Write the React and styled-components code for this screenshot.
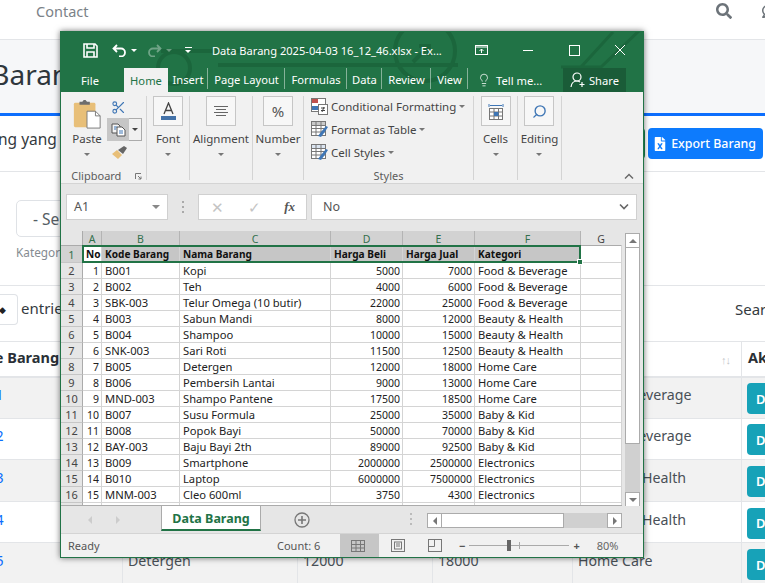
import React from 'react';
import styled, { createGlobalStyle } from 'styled-components';
import { FaSearch, FaRegComment, FaFileExcel } from 'react-icons/fa';
import { Scissors, Search, Lightbulb } from 'lucide-react';

const items = [
    [1, 'B001', 'Kopi', 5000, 7000, 'Food & Beverage'],
    [2, 'B002', 'Teh', 4000, 6000, 'Food & Beverage'],
    [3, 'SBK-003', 'Telur Omega (10 butir)', 22000, 25000, 'Food & Beverage'],
    [4, 'B003', 'Sabun Mandi', 8000, 12000, 'Beauty & Health'],
    [5, 'B004', 'Shampoo', 10000, 15000, 'Beauty & Health'],
    [6, 'SNK-003', 'Sari Roti', 11500, 12500, 'Beauty & Health'],
    [7, 'B005', 'Detergen', 12000, 18000, 'Home Care'],
    [8, 'B006', 'Pembersih Lantai', 9000, 13000, 'Home Care'],
    [9, 'MND-003', 'Shampo Pantene', 17500, 18500, 'Home Care'],
    [10, 'B007', 'Susu Formula', 25000, 35000, 'Baby & Kid'],
    [11, 'B008', 'Popok Bayi', 50000, 70000, 'Baby & Kid'],
    [12, 'BAY-003', 'Baju Bayi 2th', 89000, 92500, 'Baby & Kid'],
    [13, 'B009', 'Smartphone', 2000000, 2500000, 'Electronics'],
    [14, 'B010', 'Laptop', 6000000, 7500000, 'Electronics'],
    [15, 'MNM-003', 'Cleo 600ml', 3750, 4300, 'Electronics'],
];

const pageRows = [
    ['B001', 'Kopi', 5000, 7000, 'Food & Beverage'],
    ['B002', 'Teh', 4000, 6000, 'Food & Beverage'],
    ['B003', 'Sabun Mandi', 8000, 12000, 'Beauty & Health'],
    ['B004', 'Shampoo', 10000, 15000, 'Beauty & Health'],
    ['B005', 'Detergen', 12000, 18000, 'Home Care'],
];

const GlobalStyle = createGlobalStyle`
    html, body { margin: 0; padding: 0; background: #fff; }
    * { box-sizing: border-box; }
`;

const Page = styled.div`
    position: relative;
    width: 765px;
    height: 583px;
    overflow: hidden;
    background: #fff;
    color: #343a40;
    font-family: "Noto Sans", sans-serif;
    font-size: 14.2px;
`;

const Navbar = styled.nav`
    display: flex;
    align-items: center;
    justify-content: space-between;
    height: 40px;
    padding: 0 0 18px 36px;
    border-bottom: 1px solid #e3e5e8;
    color: #7b8288;
    font-size: 14.5px;
`;

const NavIcons = styled.div`
    display: flex;
    gap: 30px;
    margin-right: -13px;
    padding-top: 1px;
    color: #6c7379;
    font-size: 16px;
`;

const TitleBand = styled.div`
    display: flex;
    align-items: center;
    height: 76px;
    padding-bottom: 6px;
    background: #f6f7f9;
    border-bottom: 3px solid #0d6efd;
`;

const Title = styled.h1`
    margin: 0 0 0 -78px;
    font-size: 28px;
    font-weight: 400;
    color: #2f363c;
`;

const ActionRow = styled.div`
    display: flex;
    align-items: center;
    justify-content: space-between;
    height: 56px;
    padding: 0 2px 0 0;
    border-bottom: 1px solid #e3e5e8;
`;

const Lead = styled.p`
    margin: 0 0 10px -35px;
    font-size: 15.5px;
    color: #343a40;
`;

const Actions = styled.div`
    display: flex;
    gap: 3px;
`;

const PageButton = styled.button`
    display: flex;
    align-items: center;
    gap: 4px;
    height: 31px;
    padding: 0 7px 0 5px;
    border: 0;
    border-radius: 4px;
    background: ${p => p.$bg};
    color: #fff;
    font: 500 12.4px "Noto Sans", sans-serif;
`;

const FilterRow = styled.div`
    height: 114px;
    padding: 28px 0 0 16px;
    border-bottom: 1px solid #e3e5e8;
`;

const FilterSelect = styled.div`
    width: 180px;
    height: 37px;
    padding: 7px 16px;
    border: 1px solid #dfe2e6;
    border-radius: 5px;
    color: #555c63;
    font-size: 15.5px;
`;

const FilterLabel = styled.div`
    margin-top: 7px;
    color: #858b91;
    font-size: 11.8px;
`;

const Controls = styled.div`
    display: flex;
    align-items: center;
    justify-content: space-between;
    height: 55px;
    padding-bottom: 8px;
`;

const Entries = styled.div`
    display: flex;
    align-items: center;
    gap: 3px;
`;

const EntriesSelect = styled.div`
    display: flex;
    align-items: center;
    justify-content: flex-end;
    width: 18px;
    height: 31px;
    padding-right: 11px;
    border: 1px solid #dfe2e6;
    border-left: 0;
    border-radius: 0 4px 4px 0;
    font-size: 9px;
    color: #222;
`;

const EntriesText = styled.span`
    margin-bottom: 3px;
    font-size: 15px;
`;

const SearchLabel = styled.div`
    width: 30px;
    margin-bottom: 1px;
    font-size: 15px;
    white-space: nowrap;
`;

const DataTable = styled.table`
    width: 960px;
    margin-left: -40px;
    border-collapse: collapse;
    table-layout: fixed;
`;

const Th = styled.th`
    width: ${p => p.$w}px;
    height: 35px;
    padding: 0 5px 4px 6px;
    border: 1px solid #e3e5e8;
    border-bottom: 2px solid #e3e5e8;
    text-align: left;
    font-size: 14.5px;
    font-weight: 700;
    color: #2a3036;
`;

const SortMark = styled.span`
    float: right;
    color: #c3c6c9;
    font-size: 11px;
    font-weight: 400;
    letter-spacing: -1px;
    margin: 5px 6px 0 0;
`;

const Tr = styled.tr`
    background: ${p => (p.$odd ? '#f2f2f2' : '#fff')};
`;

const Td = styled.td`
    height: 41.6px;
    padding: 0 5px 6px ${p => (p.$link ? 9 : 5)}px;
    border: 1px solid #e3e5e8;
    color: ${p => p.$link ? '#0d6efd' : '#495057'};
    white-space: nowrap;
    overflow: hidden;
`;

const ActionTd = styled.td`
    height: 41.6px;
    padding: 0 5px;
    border: 1px solid #e3e5e8;
`;

const DetailButton = styled.button`
    display: block;
    width: 60px;
    height: 31px;
    margin-top: 2px;
    padding: 0 9px;
    border: 0;
    border-radius: 4px;
    background: #17a2b8;
    color: #fff;
    text-align: left;
    font: 600 13px "Noto Sans", sans-serif;
`;

/* excel window, floats over the page */
const Excel = styled.section`
    position: absolute;
    left: 60px;
    top: 31px;
    width: 584px;
    height: 527px;
    display: flex;
    flex-direction: column;
    border: 1px solid #217346;
    background: #e6e6e6;
    box-shadow: 0 0 6px rgba(0, 0, 0, .55);
    font-family: "Noto Sans", sans-serif;
    color: #444;
`;

const GreenHead = styled.header`
    position: relative;
    flex: none;
    height: 60px;
    background: #217346;
    color: #fff;
    overflow: hidden;
`;

const Circuit = styled.svg`
    position: absolute;
    inset: 0;
`;

const TitleBar = styled.div`
    position: relative;
    display: flex;
    align-items: center;
    height: 36px;
    font-size: 11.1px;
`;

const Qat = styled.div`
    display: flex;
    align-items: center;
    width: 153px;
    padding-left: 19px;
`;

const QatSlot = styled.span`
    display: flex;
    flex-direction: column;
    align-items: center;
    justify-content: center;
    gap: 2px;
    width: ${p => p.$w}px;
    margin-left: ${p => p.$ml ?? 0}px;
    opacity: ${p => (p.$dim ? 0.35 : 1)};
`;

const QatBar = styled.i`
    display: block;
    width: 7px;
    height: 1px;
    background: #fff;
`;

const DocName = styled.div`
    width: 251px;
    white-space: nowrap;
`;

const WinButtons = styled.div`
    display: flex;
    align-items: center;
`;

const WinButton = styled.span`
    display: flex;
    justify-content: center;
    width: 46px;
`;

const TabRow = styled.div`
    position: relative;
    display: flex;
    align-items: stretch;
    height: 24px;
    font-size: 11.2px;
`;

const Tab = styled.div`
    display: flex;
    align-items: center;
    justify-content: center;
    width: ${p => p.$w}px;
    padding-top: ${p => (p.$sep ? 2 : 1)}px;
    padding-right: ${p => p.$pr ?? 0}px;
    background: ${p => (p.$active ? '#f1f1f1' : 'transparent')};
    color: ${p => (p.$active ? '#217346' : '#fff')};
    box-shadow: ${p => (p.$sep ? 'inset -1px 0 0 rgba(255,255,255,.45)' : 'none')};
    margin: ${p => (p.$sep ? '0 0 3px' : '0')};
`;

const TellMe = styled.div`
    display: flex;
    align-items: center;
    gap: 5px;
    width: 95px;
    padding-left: 9px;
`;

const Share = styled.div`
    display: flex;
    align-items: center;
    justify-content: center;
    gap: 3px;
    width: 63px;
    background: #1a5c38;
`;

const Ribbon = styled.div`
    flex: none;
    display: flex;
    height: 92px;
    background: #f1f1f1;
    border-bottom: 1px solid #d4d4d4;
    font-size: 11.5px;
`;

const Group = styled.div`
    position: relative;
    flex: none;
    display: flex;
    flex-direction: column;
    align-items: center;
    width: ${p => p.$w}px;
    height: 84px;
    margin-top: 4px;
    border-right: 1px solid #d4d4d4;
`;

const GroupBody = styled.div`
    flex: 1;
    display: flex;
    flex-direction: column;
    align-items: center;
    min-height: 0;
    padding-top: 0;
`;

const GroupLabel = styled.div`
    flex: none;
    height: 14px;
    margin-bottom: -3px;
    font-size: 11px;
    color: #5c5c5c;
    line-height: 14px;
`;

const BigButton = styled.div`
    display: flex;
    align-items: center;
    justify-content: center;
    width: 30px;
    height: 30px;
    border: 1px solid #c6c6c6;
    background: #f7f7f7;
    color: #555;
    font-size: ${p => p.$fs ?? 12}px;
`;

const BigLabel = styled.div`
    margin-top: ${p => p.$top ?? 5}px;
    line-height: 16px;
    color: #444;
`;

const Caret = styled.span`
    width: 0;
    height: 0;
    margin-top: ${p => p.$top ?? 6}px;
    margin-left: ${p => p.$left ?? 0}px;
    border-left: 3px solid transparent;
    border-right: 3px solid transparent;
    border-top: 3px solid ${p => p.$c ?? '#777'};
`;

const ClipboardBody = styled.div`
    flex: 1;
    display: flex;
    width: 100%;
    min-height: 0;
    padding-left: 11px;
`;

const PasteColumn = styled.div`
    display: flex;
    flex-direction: column;
    align-items: center;
    width: 30px;
    padding-top: 3px;
`;

const ClipTools = styled.div`
    display: flex;
    flex-direction: column;
    align-items: flex-start;
    margin-left: 5px;
`;

const ToolSlot = styled.div`
    display: flex;
    align-items: center;
    height: ${p => p.$h}px;
    padding-left: 4px;
    color: #3f76b5;
`;

const CopyBox = styled.div`
    display: flex;
    width: 35px;
    height: 23px;
`;

const CopyIcon = styled.div`
    display: flex;
    align-items: center;
    justify-content: center;
    width: 22px;
    background: #c6c6c6;
`;

const CopyDrop = styled.div`
    display: flex;
    align-items: center;
    justify-content: center;
    width: 13px;
    border: 1px solid #ababab;
    border-left: 0;
`;

const Launcher = styled.svg`
    position: absolute;
    right: 4px;
    bottom: 0;
`;

const StyleList = styled.div`
    flex: 1;
    display: flex;
    flex-direction: column;
    align-self: flex-start;
    min-height: 0;
    margin-top: -1px;
    padding-left: 7px;
`;

const StyleLine = styled.div`
    display: flex;
    align-items: center;
    gap: 3px;
    flex: none;
    height: 23px;
    font-size: 11.5px;
    white-space: nowrap;
`;

const Collapse = styled.svg`
    position: absolute;
    right: 9px;
    bottom: 3px;
`;

const RibbonEnd = styled.div`
    position: relative;
    flex: 1;
`;

const FormulaBar = styled.div`
    flex: none;
    display: flex;
    align-items: center;
    height: 47px;
    padding: 0 6px 2px 5px;
    background: #e6e6e6;
`;

const FieldBox = styled.div`
    display: flex;
    align-items: center;
    justify-content: ${p => p.$between ? 'space-between' : 'flex-start'};
    flex: ${p => (p.$w ? 'none' : 1)};
    width: ${p => p.$w}px;
    height: 26px;
    margin-right: ${p => p.$mr ?? 0}px;
    padding: 0 7px 0 ${p => p.$pl ?? 7}px;
    background: #fff;
    border: 1px solid #d0d0d0;
    font-size: 12.5px;
    color: #555;
`;

const Grip = styled.div`
    width: 2px;
    height: 12px;
    margin: 0 14px;
    background: repeating-linear-gradient(#aaa 0 2px, transparent 2px 5px);
`;

const FxIcons = styled.div`
    display: flex;
    align-items: center;
    justify-content: space-between;
    width: 100%;
    padding: 0 4px 0 5px;
    color: #c4c4c4;
    font-size: 15px;
`;

const Fx = styled.span`
    color: #555;
    font: italic 700 13px "Liberation Serif", serif;
`;

const SheetArea = styled.div`
    flex: none;
    display: flex;
    height: 275px;
`;

const SheetGrid = styled.div`
    position: relative;
    display: grid;
    grid-template-columns: 22px 19px 78px 151px 72px 72px 106px 41px;
    grid-template-rows: 15px 17px repeat(15, 16px) 3px;
    width: 561px;
    height: 275px;
    background: #fff;
    overflow: hidden;
    border-bottom: 1px solid #ababab;
    font-size: 11.2px;
    color: #222;
`;

const Corner = styled.div`
    display: flex;
    align-items: flex-end;
    justify-content: flex-end;
    padding: 0 2px 2px 0;
    background: #e6e6e6;
    border-right: 1px solid #ababab;
    border-bottom: 1px solid #ababab;
`;

const ColHead = styled.div`
    display: flex;
    align-items: center;
    justify-content: center;
    padding-top: 1px;
    background: ${p => (p.$on ? '#d2d2d2' : '#e6e6e6')};
    color: ${p => (p.$on ? '#33704d' : '#444')};
    border-right: 1px solid ${p => (p.$on ? '#b4b4b4' : '#e6e6e6')};
    border-bottom: 1px solid #ababab;
    font-size: 10.5px;
`;

const RowHead = styled.div`
    display: flex;
    align-items: center;
    justify-content: center;
    background: ${p => (p.$on ? '#d2d2d2' : '#e6e6e6')};
    color: ${p => (p.$on ? '#33704d' : '#444')};
    border-right: 1px solid #ababab;
    border-bottom: 1px solid #c6c6c6;
    font-size: 11px;
`;

const Cell = styled.div`
    display: flex;
    align-items: center;
    justify-content: ${p => (p.$num ? 'flex-end' : 'flex-start')};
    padding: 0 2px 0 ${p => (p.$num ? 2 : 3)}px;
    border-right: 1px solid #d4d4d4;
    border-bottom: 1px solid #d4d4d4;
    background: ${p => (p.$sel ? '#c6c6c6' : '#fff')};
    font-size: ${p => (p.$head ? 10.1 : p.$num ? 10.5 : 11.2)}px;
    font-weight: ${p => (p.$head ? 700 : 400)};
    color: ${p => (p.$head ? '#111' : '#222')};
    white-space: nowrap;
    overflow: hidden;
`;

const Selection = styled.div`
    position: absolute;
    left: 21px;
    top: 14px;
    width: 499px;
    height: 18px;
    border: 2px solid #217346;
`;

const FillHandle = styled.div`
    position: absolute;
    right: -4px;
    bottom: -4px;
    width: 6px;
    height: 6px;
    background: #217346;
    border: 1px solid #fff;
`;

const VScroll = styled.div`
    display: flex;
    flex-direction: column;
    width: 15px;
    height: 274px;
    margin: 2px 0 0 3px;
    background: #d0d0d0;
`;

const ScrollBtn = styled.div`
    flex: none;
    display: flex;
    align-items: center;
    justify-content: center;
    width: ${p => p.$w ?? 15}px;
    height: ${p => p.$h ?? 15}px;
    background: #fff;
    border: 1px solid #ababab;
`;

const VThumb = styled.div`
    flex: none;
    height: 196px;
    background: #fff;
    border: 1px solid #ababab;
    border-top: 0;
`;

const Spring = styled.div`
    flex: 1;
`;

const Arrow = styled.span`
    width: 0;
    height: 0;
    border: 4px solid transparent;
    ${p => p.$dir === 'up' && `border-bottom-color: ${p.$c}; border-top-width: 0;`}
    ${p => p.$dir === 'down' && `border-top-color: ${p.$c}; border-bottom-width: 0;`}
    ${p => p.$dir === 'left' && `border-right-color: ${p.$c}; border-left-width: 0;`}
    ${p => p.$dir === 'right' && `border-left-color: ${p.$c}; border-right-width: 0;`}
`;

const SheetBar = styled.div`
    flex: none;
    display: flex;
    align-items: flex-start;
    height: 28px;
    background: #e6e6e6;
    border-bottom: 1px solid #d4d4d4;
`;

const SheetNav = styled.div`
    display: flex;
    align-items: center;
    gap: 24px;
    width: 100px;
    height: 27px;
    padding-left: 27px;
`;

const SheetTab = styled.div`
    display: flex;
    align-items: center;
    justify-content: center;
    width: 100px;
    height: 25px;
    padding-top: 2px;
    background: #fff;
    border-left: 1px solid #ababab;
    border-right: 1px solid #ababab;
    border-bottom: 2px solid #217346;
    color: #217346;
    font-size: 12.5px;
    font-weight: 700;
`;

const AddSheet = styled.div`
    display: flex;
    justify-content: center;
    width: 81px;
    padding-top: 6px;
`;

const BarGrip = styled.div`
    width: 2px;
    height: 12px;
    margin: 7px 15px 0 68px;
    background: repeating-linear-gradient(#bbb 0 2px, transparent 2px 5px);
`;

const HScroll = styled.div`
    display: flex;
    width: 195px;
    height: 15px;
    margin-top: 7px;
    background: #d0d0d0;
`;

const HThumb = styled.div`
    flex: none;
    width: 122px;
    background: #fff;
    border: 1px solid #ababab;
    border-left: 0;
`;

const StatusBar = styled.footer`
    flex: 1;
    display: flex;
    align-items: center;
    background: #f1f1f1;
    font-size: 11px;
    color: #555;
`;

const Ready = styled.div`
    width: 216px;
    padding-left: 7px;
`;

const Count = styled.div`
    width: 63px;
`;

const ViewBtn = styled.div`
    display: flex;
    align-items: center;
    justify-content: center;
    width: ${p => p.$w}px;
    height: 100%;
    padding-right: ${p => p.$pr ?? 0}px;
    background: ${p => (p.$on ? '#c6c6c6' : 'transparent')};
`;

const Zoom = styled.div`
    display: flex;
    align-items: center;
    margin-left: 6px;
    color: #555;
`;

const Slider = styled.div`
    position: relative;
    width: 100px;
    height: 1px;
    margin: 0 4px;
    background: #aaa;
`;

const SliderKnob = styled.span`
    position: absolute;
    left: 38px;
    top: -5px;
    width: 4px;
    height: 11px;
    background: #666;
`;

const SliderTick = styled.span`
    position: absolute;
    left: 50px;
    top: -3px;
    width: 1px;
    height: 7px;
    background: #aaa;
`;

const Percent = styled.div`
    margin-left: 17px;
    font-size: 11px;
    color: #666;
`;

const SaveIcon = () => (
    <svg width="15" height="15" viewBox="0 0 15 15" fill="none" stroke="#fff" strokeWidth="1.6">
        <path d="M1 1h11l2 2v11H1z" />
        <path d="M4 1v4h7V1M4 14V9h7v5" />
    </svg>
);

const UndoIcon = ({ color = '#fff', flip }) => (
    <svg width="15" height="13" viewBox="0 0 15 13" fill="none" stroke={color} strokeWidth="1.8" style={flip ? { transform: 'scaleX(-1)' } : undefined}>
        <path d="M5 1 1.500 4.500 5 8M2 4.500h7a4 4 0 0 1 0 8H7" />
    </svg>
);

const PasteIcon = () => (
    <svg width="30" height="30" viewBox="0 0 30 32" style={{ flex: 'none' }}>
        <rect x="1" y="4" width="23" height="26" rx="1.500" fill="#e8bf78" />
        <path d="M7 6V3h3l1.500-2h2L15 3h3v3z" fill="#6d6d6d" />
        <path d="M15 13h9l5 5v13H15z" fill="#fff" stroke="#777" />
        <path d="M24 13v5h5" fill="none" stroke="#777" />
    </svg>
);

const CopySmall = () => (
    <svg width="15" height="14" viewBox="0 0 15 14" fill="#f4f4f4" stroke="#555">
        <path d="M1 1h6l2 2v7H1z" />
        <path d="M6 4h5l3 3v6H6z" fill="#fff" />
        <path d="M3 4h3M3 6h2M8 8h4M8 10h4" stroke="#3f76b5" />
    </svg>
);

const BrushIcon = () => (
    <svg width="17" height="15" viewBox="0 0 17 15">
        <path d="M1 9l5-4 5 5-4 4z" fill="#e8bf78" />
        <path d="M6 5l6-4 3 2-4 6z" fill="#666" transform="translate(1 0)" />
    </svg>
);

const TableIcon = ({ tint }) => (
    <svg width="17" height="17" viewBox="0 0 17 17" fill="none" stroke="#777">
        <rect x=".5" y=".5" width="14" height="14" fill="#fff" />
        <rect x=".5" y=".5" width="14" height="4" fill={tint} />
        <path d="M.5 7.500h14M.5 11h14M5 .5v14M10 .5v14" />
        <path d="M7 15l3-4 5-6 2 1-4 6-3 4z" fill="#3f76b5" stroke="none" />
    </svg>
);

const CondIcon = () => (
    <svg width="17" height="17" viewBox="0 0 17 17" stroke="#777">
        <rect x=".5" y=".5" width="14" height="13" fill="#fff" />
        <rect x="1" y="1" width="6" height="4" fill="#c0504d" stroke="none" />
        <rect x="1" y="8" width="6" height="4" fill="#3f76b5" stroke="none" />
        <rect x="7.500" y="6.500" width="9" height="10" fill="#fff" />
        <path d="M10 10h4M10 12.500h4M11 14l2-5" stroke="#444" fill="none" />
    </svg>
);

const ShareIcon = () => (
    <svg width="16" height="16" viewBox="0 0 16 16" fill="none" stroke="#fff" strokeWidth="1.2">
        <circle cx="7" cy="5" r="4" />
        <path d="M1 15c.5-4 3-6 6-6 1.200 0 2 .3 3 1M12 10v5M9.500 12.500h5" />
    </svg>
);

const App = () => {
    return (
        <Page>
            <GlobalStyle />
            <Navbar>
                <span>Contact</span>
                <NavIcons>
                    <FaSearch />
                    <FaRegComment />
                </NavIcons>
            </Navbar>
            <TitleBand>
                <Title>Data Barang</Title>
            </TitleBand>
            <ActionRow>
                <Lead>barang yang tersedia</Lead>
                <Actions>
                    <PageButton $bg="#198754">Import</PageButton>
                    <PageButton $bg="#0d7bfd"><FaFileExcel size={14} /> Export Barang</PageButton>
                </Actions>
            </ActionRow>
            <FilterRow>
                <FilterSelect>- Semua Kategori -</FilterSelect>
                <FilterLabel>Kategori</FilterLabel>
            </FilterRow>
            <Controls>
                <Entries>
                    <EntriesSelect>◆</EntriesSelect>
                    <EntriesText>entries per page</EntriesText>
                </Entries>
                <SearchLabel>Search:</SearchLabel>
            </Controls>
            <DataTable>
                <thead>
                    <tr>
                        <Th $w={162}>Kode Barang</Th>
                        <Th $w={175}>Nama Barang</Th>
                        <Th $w={135}>Harga Beli</Th>
                        <Th $w={140}>Harga Jual</Th>
                        <Th $w={169}>Kategori<SortMark>↑↓</SortMark></Th>
                        <Th $w={179}>Aksi</Th>
                    </tr>
                </thead>
                <tbody>
                    {pageRows.map((row, i) => (
                        <Tr key={row[0]} $odd={i % 2 === 0}>
                            <Td $link>{row[0]}</Td>
                            <Td>{row[1]}</Td>
                            <Td>{row[2]}</Td>
                            <Td>{row[3]}</Td>
                            <Td>{row[4]}</Td>
                            <ActionTd><DetailButton>Detail</DetailButton></ActionTd>
                        </Tr>
                    ))}
                </tbody>
            </DataTable>

            <Excel>
                <GreenHead>
                    <Circuit width="582" height="60" viewBox="0 0 582 60" fill="none" stroke="#1b663c" strokeWidth="4">
                        <path d="M100 19h150M157 33h240" />
                        <circle cx="113" cy="36" r="16" />
                        <circle cx="364" cy="19" r="30" />
                        <path d="M352 30l16-16M358 14h10v10" />
                        <path d="M500 35h40l40-38M520 35l32-35" strokeWidth="3" />
                    </Circuit>
                    <TitleBar>
                        <Qat>
                            <QatSlot $w={20}><SaveIcon /></QatSlot>
                            <QatSlot $w={18} $ml={10}><UndoIcon /></QatSlot>
                            <QatSlot $w={12}><Caret $top={0} $c="#fff" /></QatSlot>
                            <QatSlot $w={20} $ml={4} $dim><UndoIcon flip /></QatSlot>
                            <QatSlot $w={10} $dim><Caret $top={0} $c="#fff" /></QatSlot>
                            <QatSlot $w={20} $ml={4}><QatBar /><Caret $top={0} $c="#fff" /></QatSlot>
                        </Qat>
                        <DocName>Data Barang 2025-04-03 16_12_46.xlsx - Ex...</DocName>
                        <WinButtons>
                            <WinButton>
                                <svg width="14" height="10" viewBox="0 0 14 10" fill="none" stroke="#fff"><rect x=".5" y=".5" width="12" height="9" /><path d="M.5 2h12M6.500 8V4M4.500 6l2-2 2 2" /></svg>
                            </WinButton>
                            <WinButton>
                                <svg width="12" height="12" viewBox="0 0 12 12" stroke="#fff"><path d="M1 6.500h10" /></svg>
                            </WinButton>
                            <WinButton>
                                <svg width="11" height="11" viewBox="0 0 11 11" fill="none" stroke="#fff"><rect x=".5" y=".5" width="10" height="10" /></svg>
                            </WinButton>
                            <WinButton>
                                <svg width="12" height="12" viewBox="0 0 12 12" stroke="#fff"><path d="M1 1l10 10M11 1 1 11" /></svg>
                            </WinButton>
                        </WinButtons>
                    </TitleBar>
                    <TabRow>
                        <Tab $w={63} $pr={5}>File</Tab>
                        <Tab $w={44} $active>Home</Tab>
                        <Tab $w={40} $sep>Insert</Tab>
                        <Tab $w={77} $sep>Page Layout</Tab>
                        <Tab $w={62} $sep>Formulas</Tab>
                        <Tab $w={35} $sep>Data</Tab>
                        <Tab $w={49} $sep>Review</Tab>
                        <Tab $w={37} $sep>View</Tab>
                        <TellMe><Lightbulb size={14} strokeWidth={1.3} />Tell me...</TellMe>
                        <Share><ShareIcon />Share</Share>
                    </TabRow>
                </GreenHead>
                <Ribbon>
                    <Group $w={86}>
                        <ClipboardBody>
                            <PasteColumn>
                                <PasteIcon />
                                <BigLabel $top={2}>Paste</BigLabel>
                                <Caret />
                            </PasteColumn>
                            <ClipTools>
                                <ToolSlot $h={22}><Scissors size={15} strokeWidth={1.8} /></ToolSlot>
                                <CopyBox>
                                    <CopyIcon><CopySmall /></CopyIcon>
                                    <CopyDrop><Caret $top={0} $c="#444" /></CopyDrop>
                                </CopyBox>
                                <ToolSlot $h={22}><BrushIcon /></ToolSlot>
                            </ClipTools>
                        </ClipboardBody>
                        <GroupLabel>Clipboard&nbsp;&nbsp;&nbsp;&nbsp;&nbsp;</GroupLabel>
                        <Launcher width="7" height="7" viewBox="0 0 7 7" fill="none" stroke="#777"><path d="M.5 6V.5H6M3 3l3 3M6 3.500V6H3.500" /></Launcher>
                    </Group>
                    <Group $w={43}>
                        <GroupBody>
                            <BigButton>
                                <svg width="17" height="18" viewBox="0 0 17 18">
                                    <path d="M4 12 8.500 1 13 12M5.500 8.500h6" fill="none" stroke="#444" strokeWidth="1.300" />
                                    <rect x="1" y="14" width="15" height="4" fill="#4472a8" />
                                </svg>
                            </BigButton>
                            <BigLabel>Font</BigLabel>
                            <Caret />
                        </GroupBody>
                    </Group>
                    <Group $w={63}>
                        <GroupBody>
                            <BigButton>
                                <svg width="16" height="12" viewBox="0 0 16 12" stroke="#666"><path d="M1 1.500h14M3 4.500h10M1 7.500h14M3 10.500h10" /></svg>
                            </BigButton>
                            <BigLabel>Alignment</BigLabel>
                            <Caret />
                        </GroupBody>
                    </Group>
                    <Group $w={51}>
                        <GroupBody>
                            <BigButton $fs={15}>%</BigButton>
                            <BigLabel>Number</BigLabel>
                            <Caret />
                        </GroupBody>
                    </Group>
                    <Group $w={170}>
                        <StyleList>
                            <StyleLine><CondIcon />Conditional Formatting<Caret $top={0} /></StyleLine>
                            <StyleLine><TableIcon tint="#c9c9c9" />Format as Table<Caret $top={0} /></StyleLine>
                            <StyleLine><TableIcon tint="#dbe5f1" />Cell Styles<Caret $top={0} /></StyleLine>
                        </StyleList>
                        <GroupLabel>Styles</GroupLabel>
                    </Group>
                    <Group $w={44}>
                        <GroupBody>
                            <BigButton>
                                <svg width="16" height="17" viewBox="0 0 16 17" fill="none" stroke="#777">
                                    <path d="M1 1v3M15 1v3M2 2.500h12" stroke="#3f76b5" />
                                    <rect x="1.500" y="5.500" width="13" height="11" fill="#fff" />
                                    <path d="M1.500 9h13M1.500 13h13M6 5.500v11M10.500 5.500v11" />
                                    <rect x="6" y="9" width="4.500" height="4" fill="#3f76b5" stroke="none" />
                                </svg>
                            </BigButton>
                            <BigLabel>Cells</BigLabel>
                            <Caret />
                        </GroupBody>
                    </Group>
                    <Group $w={44}>
                        <GroupBody>
                            <BigButton>
                                <Search size={15} color="#3f76b5" strokeWidth={2.2} style={{ transform: 'scaleX(-1)' }} />
                            </BigButton>
                            <BigLabel>Editing</BigLabel>
                            <Caret />
                        </GroupBody>
                    </Group>
                    <RibbonEnd>
                        <Collapse width="10" height="7" viewBox="0 0 10 7" fill="none" stroke="#666" strokeWidth="1.400"><path d="M1 5.500 5 1.500l4 4" /></Collapse>
                    </RibbonEnd>
                </Ribbon>
                <FormulaBar>
                    <FieldBox $w={102} $between>
                        A1
                        <Arrow $dir="down" $c="#888" />
                    </FieldBox>
                    <Grip />
                    <FieldBox $w={109} $mr={4}>
                        <FxIcons><span>✕</span><span>✓</span><Fx>fx</Fx></FxIcons>
                    </FieldBox>
                    <FieldBox $between $pl={11}>
                        No
                        <svg width="10" height="7" viewBox="0 0 10 7" fill="none" stroke="#666" strokeWidth="1.600"><path d="M1 1.500 5 5.500l4-4" /></svg>
                    </FieldBox>
                </FormulaBar>
                <SheetArea>
                    <SheetGrid>
                        <Corner><Arrow $dir="right" $c="transparent" /></Corner>
                        {['A', 'B', 'C', 'D', 'E', 'F'].map(c => <ColHead key={c} $on>{c}</ColHead>)}
                        <ColHead>G</ColHead>

                        <RowHead $on>1</RowHead>
                        <Cell $head>No</Cell>
                        <Cell $head $sel>Kode Barang</Cell>
                        <Cell $head $sel>Nama Barang</Cell>
                        <Cell $head $sel>Harga Beli</Cell>
                        <Cell $head $sel>Harga Jual</Cell>
                        <Cell $head $sel>Kategori</Cell>
                        <Cell />

                        {items.map((row, i) => (
                            <React.Fragment key={row[0]}>
                                <RowHead>{i + 2}</RowHead>
                                <Cell $num>{row[0]}</Cell>
                                <Cell>{row[1]}</Cell>
                                <Cell>{row[2]}</Cell>
                                <Cell $num>{row[3]}</Cell>
                                <Cell $num>{row[4]}</Cell>
                                <Cell>{row[5]}</Cell>
                                <Cell />
                            </React.Fragment>
                        ))}

                        <RowHead />
                        <Cell /><Cell /><Cell /><Cell /><Cell /><Cell /><Cell />

                        <Selection><FillHandle /></Selection>
                    </SheetGrid>
                    <VScroll>
                        <ScrollBtn><Arrow $dir="up" $c="#777" /></ScrollBtn>
                        <VThumb />
                        <Spring />
                        <ScrollBtn><Arrow $dir="down" $c="#777" /></ScrollBtn>
                    </VScroll>
                </SheetArea>
                <SheetBar>
                    <SheetNav>
                        <Arrow $dir="left" $c="#ccc" />
                        <Arrow $dir="right" $c="#ccc" />
                    </SheetNav>
                    <SheetTab>Data Barang</SheetTab>
                    <AddSheet>
                        <svg width="16" height="16" viewBox="0 0 16 16" fill="none" stroke="#777" strokeWidth="1.300"><circle cx="8" cy="8" r="7" /><path d="M8 4v8M4 8h8" strokeWidth="1.600" /></svg>
                    </AddSheet>
                    <BarGrip />
                    <HScroll>
                        <ScrollBtn><Arrow $dir="left" $c="#777" /></ScrollBtn>
                        <HThumb />
                        <Spring />
                        <ScrollBtn><Arrow $dir="right" $c="#777" /></ScrollBtn>
                    </HScroll>
                </SheetBar>
                <StatusBar>
                    <Ready>Ready</Ready>
                    <Count>Count: 6</Count>
                    <ViewBtn $w={39} $on $pr={3}>
                        <svg width="14" height="12" viewBox="0 0 14 12" fill="none" stroke="#777"><rect x=".5" y=".5" width="13" height="11" /><path d="M.5 4.500h13M.5 8h13M5 .5v11M9.500 .5v11" /></svg>
                    </ViewBtn>
                    <ViewBtn $w={38}>
                        <svg width="14" height="13" viewBox="0 0 14 13" fill="none" stroke="#777"><rect x=".5" y=".5" width="13" height="12" /><rect x="3.500" y="3" width="7" height="7" /><path d="M5 5h4M5 7h4" /></svg>
                    </ViewBtn>
                    <ViewBtn $w={36}>
                        <svg width="14" height="13" viewBox="0 0 14 13" fill="none" stroke="#777"><rect x=".5" y=".5" width="13" height="12" /><path d="M.5 7.500h6V.5" /></svg>
                    </ViewBtn>
                    <Zoom>
                        <strong>−</strong>
                        <Slider><SliderKnob /><SliderTick /></Slider>
                        <strong>+</strong>
                    </Zoom>
                    <Percent>80%</Percent>
                </StatusBar>
            </Excel>
        </Page>
    );
};

export default App;
